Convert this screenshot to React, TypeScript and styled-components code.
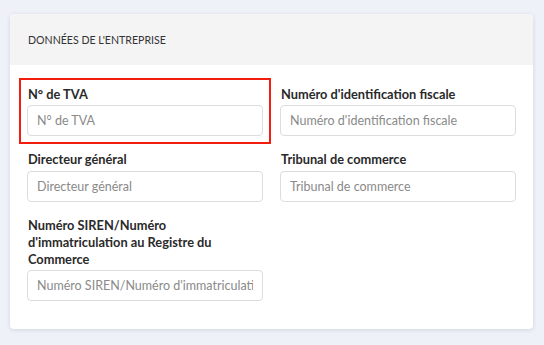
import React from "react";
import styled, { createGlobalStyle } from "styled-components";

const Global = createGlobalStyle`
  html, body { margin: 0; padding: 0; background: #eef1f8; }
  body { font-family: Lato, "Open Sans", sans-serif; }
  * { box-sizing: border-box; }
`;

const Page = styled.div`
  padding: 14px 11px 15px 10px;
`;

const Card = styled.section`
  background: #ffffff;
  border-radius: 4px;
  box-shadow: 0 1px 4px rgba(40, 50, 80, 0.14);
  overflow: hidden;
`;

const CardHeader = styled.header`
  height: 51px;
  display: flex;
  align-items: center;
  padding: 0 18px;
  background: #f4f4f4;
`;

const Title = styled.h2`
  margin: 0;
  font-size: 10.6px;
  font-weight: 400;
  color: #333;
  text-transform: uppercase;
`;

const CardBody = styled.div`
  display: grid;
  grid-template-columns: 236px 236px;
  column-gap: 17px;
  row-gap: 15px;
  padding: 21px 17px 28px;
`;

const Field = styled.div<{ $highlight?: boolean }>`
  display: flex;
  flex-direction: column;
  justify-content: flex-end;
  gap: 2px;
  ${(p) => (p.$highlight ? "outline: 2px solid #f41b0f; outline-offset: 6px;" : "")}
`;

const Label = styled.label`
  font-size: 12.8px;
  font-weight: 700;
  color: #2a2a2a;
  line-height: 17.3px;
  padding-left: 1px;
`;

const Input = styled.input`
  width: 236px;
  height: 31px;
  border: 1px solid #dcdcdc;
  border-radius: 4px;
  padding: 0 9px;
  font-family: inherit;
  font-size: 12.5px;
  color: #333;
  background: #fff;
  &::placeholder { color: #8a8a8a; }
`;

const fields = [
  { label: "N° de TVA", highlight: true },
  { label: "Numéro d'identification fiscale" },
  { label: "Directeur général" },
  { label: "Tribunal de commerce" },
  { label: "Numéro SIREN/Numéro d'immatriculation au Registre du Commerce" },
];

export default function App() {
  return (
    <>
      <Global />
      <Page>
        <Card>
          <CardHeader>
            <Title>Données de l'entreprise</Title>
          </CardHeader>
          <CardBody>
            {fields.map((f) => (
              <Field key={f.label} $highlight={f.highlight}>
                <Label>{f.label}</Label>
                <Input placeholder={f.label} />
              </Field>
            ))}
          </CardBody>
        </Card>
      </Page>
    </>
  );
}
